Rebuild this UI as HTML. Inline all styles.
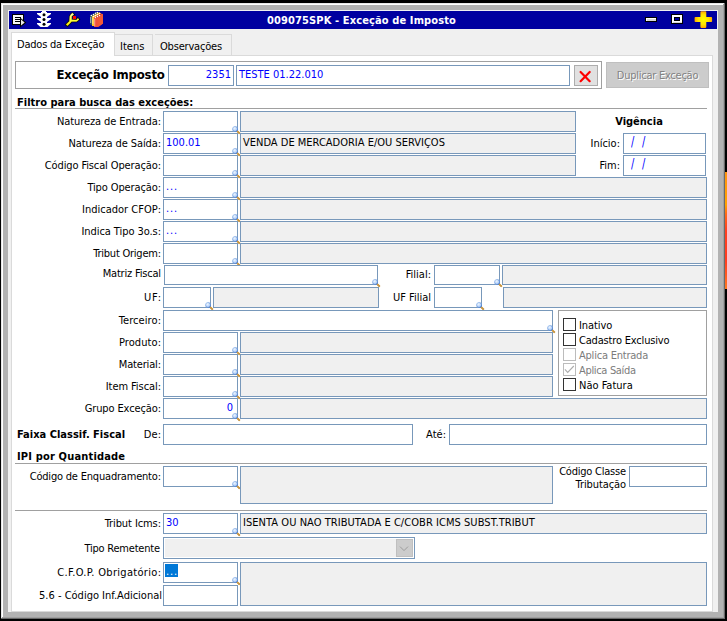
<!DOCTYPE html>
<html lang="pt-BR"><head><meta charset="utf-8"><title>009075SPK - Exceção de Imposto</title>
<style>
html,body{margin:0;padding:0;background:#000;width:727px;height:621px;overflow:hidden}
body{position:relative;font-family:"DejaVu Sans Condensed","Liberation Sans",sans-serif;font-size:11px}
.b{position:absolute;border:1px solid;box-sizing:content-box}
.r{position:absolute}
.t{position:absolute;white-space:nowrap}
svg{display:block;overflow:visible}
</style></head>
<body>
<svg width="0" height="0" style="position:absolute"><defs><radialGradient id="mg" cx="35%" cy="30%" r="75%"><stop offset="0" stop-color="#f4f9ff"/><stop offset="0.5" stop-color="#c4dcfb"/><stop offset="1" stop-color="#8db2f2"/></radialGradient><linearGradient id="ms" x1="0" y1="0" x2="1" y2="1"><stop offset="0" stop-color="#a9c9f3"/><stop offset="1" stop-color="#3f74c6"/></linearGradient></defs></svg>
<div class="r" style="left:1px;top:3px;width:724px;height:616px;background:#b2b2b2;"></div>
<div class="r" style="left:1px;top:3px;width:723px;height:1px;background:#e8e8e8;"></div>
<div class="r" style="left:1px;top:3px;width:1px;height:615px;background:#e8e8e8;"></div>
<div class="r" style="left:2px;top:4px;width:721px;height:1px;background:#fff;"></div>
<div class="r" style="left:2px;top:4px;width:1px;height:613px;background:#fff;"></div>
<div class="r" style="left:723px;top:4px;width:1px;height:614px;background:#a0a0a0;"></div>
<div class="r" style="left:2px;top:617px;width:722px;height:1px;background:#a0a0a0;"></div>
<div class="r" style="left:724px;top:3px;width:1px;height:616px;background:#696969;"></div>
<div class="r" style="left:1px;top:618px;width:724px;height:1px;background:#696969;"></div>
<div class="r" style="left:8px;top:10px;width:710px;height:602px;background:#f0f0f0;"></div>
<div class="r" style="left:9px;top:11px;width:708px;height:18px;background:#0000a0;"></div>
<div class="r" style="left:725px;top:172px;width:2px;height:117px;background:#f26a1b;background:linear-gradient(180deg,#ff9410 0%,#ffa200 28%,#ff6a18 36%,#ff4020 50%,#ff3c20 75%,#ff5a20 88%,#ff7a20 100%);"></div>
<div class="r" style="left:11px;top:55px;width:702px;height:556px;background:#fff;"></div>
<div class="r" style="left:11px;top:55px;width:1px;height:557px;background:#dadada;"></div>
<div class="r" style="left:712px;top:55px;width:1px;height:557px;background:#dadada;"></div>
<div class="r" style="left:11px;top:55px;width:702px;height:1px;background:#dadada;"></div>
<div class="r" style="left:11px;top:611px;width:702px;height:1px;background:#dadada;"></div>
<div class="r" style="left:115px;top:34px;width:117px;height:21px;background:#f0f0f0;"></div>
<div class="r" style="left:115px;top:34px;width:38px;height:1px;background:#dadada;"></div>
<div class="r" style="left:152px;top:34px;width:1px;height:21px;background:#dadada;"></div>
<div class="r" style="left:155px;top:34px;width:77px;height:1px;background:#dadada;"></div>
<div class="r" style="left:231px;top:34px;width:1px;height:21px;background:#dadada;"></div>
<div class="r" style="left:11px;top:32px;width:104px;height:24px;background:#fff;"></div>
<div class="r" style="left:11px;top:32px;width:104px;height:1px;background:#dadada;"></div>
<div class="r" style="left:11px;top:32px;width:1px;height:24px;background:#dadada;"></div>
<div class="r" style="left:114px;top:32px;width:1px;height:24px;background:#dadada;"></div>
<div class="t" style="top:37.19px;color:#000;font-size:11px;line-height:16px;left:17px;letter-spacing:-0.22px;">Dados da Exceção</div>
<div class="t" style="top:39.19px;color:#000;font-size:11px;line-height:16px;left:120px;">Itens</div>
<div class="t" style="top:39.19px;color:#000;font-size:11px;line-height:16px;left:160px;letter-spacing:-0.2px;">Observações</div>
<div class="t" style="top:13.19px;color:#fff;font-size:11px;line-height:16px;font-weight:bold;left:0px;left:-2px;width:727px;text-align:center;letter-spacing:0.12px;">009075SPK - Exceção de Imposto</div>
<div class="b" style="left:15px;top:61px;width:585px;height:26px;background:#fff;border-color:#a0a0a0;"></div>
<div class="t" style="top:64.50px;color:#000;font-size:13px;line-height:20px;font-weight:bold;left:56.5px;letter-spacing:-0.18px;">Exceção Imposto</div>
<div class="b" style="left:168px;top:65px;width:64px;height:19px;background:#fff;border-color:#7898ba;"></div>
<div class="t" style="top:67.19px;color:#0000ff;font-size:11px;line-height:16px;right:496px;">2351</div>
<div class="b" style="left:236px;top:65px;width:332px;height:19px;background:#fff;border-color:#7898ba;"></div>
<div class="t" style="top:67.19px;color:#0000ff;font-size:11px;line-height:16px;left:239px;">TESTE 01.22.010</div>
<div class="b" style="left:574px;top:65px;width:22px;height:19px;background:#e1e1e1;border-color:#adadad;"></div>
<svg class="r" style="left:574px;top:65px" width="24" height="21" viewBox="574 65 24 21"><path d="M580.6 72 L589.7 81.2 M589.7 72 L580.6 81.2" stroke="#f00" stroke-width="2.2" stroke-linecap="round"/></svg>
<div class="b" style="left:606px;top:62px;width:101px;height:24px;background:#cccccc;border-color:#bfbfbf;"></div>
<div class="t" style="top:68.19px;color:#838383;font-size:11px;line-height:16px;left:0px;left:606px;width:103px;text-align:center;text-shadow:1px 1px 0 #fff;letter-spacing:-0.25px;">Duplicar Exceção</div>
<div class="t" style="top:95.19px;color:#000;font-size:11px;line-height:16px;font-weight:bold;left:17px;">Filtro para busca das exceções:</div>
<div class="r" style="left:15px;top:108px;width:692px;height:1px;background:#a0a0a0;"></div>
<div class="t" style="top:114.19px;color:#000;font-size:11px;line-height:16px;right:566px;letter-spacing:-0.084px;margin-right:0.084px;">Natureza de Entrada:</div>
<div class="b" style="left:163px;top:111px;width:73px;height:19px;background:#fff;border-color:#7898ba;"></div>
<div class="b" style="left:240px;top:111px;width:334px;height:19px;background:#f0f0f0;border-color:#7898ba;"></div>
<svg class="r" style="left:231px;top:125px" width="10" height="10" viewBox="0 0 10 10"><path d="M5.9 5.9 L8.8 8.7" stroke="#b07a1c" stroke-width="1.8"/><path d="M5.9 5.6 L8.9 8.4" stroke="#e3ad58" stroke-width="0.9"/><circle cx="4.1" cy="4.05" r="2.55" fill="url(#mg)" stroke="url(#ms)" stroke-width="0.9"/></svg>
<div class="t" style="top:136.19px;color:#000;font-size:11px;line-height:16px;right:566px;letter-spacing:-0.106px;margin-right:0.106px;">Natureza de Saída:</div>
<div class="b" style="left:163px;top:133px;width:73px;height:19px;background:#fff;border-color:#7898ba;"></div>
<div class="t" style="top:135.19px;color:#0000ff;font-size:11px;line-height:16px;left:166px;">100.01</div>
<div class="b" style="left:240px;top:133px;width:334px;height:19px;background:#f0f0f0;border-color:#7898ba;"></div>
<div class="t" style="top:135.19px;color:#000;font-size:11px;line-height:16px;left:243px;">VENDA DE MERCADORIA E/OU SERVIÇOS</div>
<svg class="r" style="left:231px;top:147px" width="10" height="10" viewBox="0 0 10 10"><path d="M5.9 5.9 L8.8 8.7" stroke="#b07a1c" stroke-width="1.8"/><path d="M5.9 5.6 L8.9 8.4" stroke="#e3ad58" stroke-width="0.9"/><circle cx="4.1" cy="4.05" r="2.55" fill="url(#mg)" stroke="url(#ms)" stroke-width="0.9"/></svg>
<div class="t" style="top:158.19px;color:#000;font-size:11px;line-height:16px;right:566px;letter-spacing:-0.118px;margin-right:0.118px;">Código Fiscal Operação:</div>
<div class="b" style="left:163px;top:155px;width:73px;height:19px;background:#fff;border-color:#7898ba;"></div>
<div class="b" style="left:240px;top:155px;width:334px;height:19px;background:#f0f0f0;border-color:#7898ba;"></div>
<svg class="r" style="left:231px;top:169px" width="10" height="10" viewBox="0 0 10 10"><path d="M5.9 5.9 L8.8 8.7" stroke="#b07a1c" stroke-width="1.8"/><path d="M5.9 5.6 L8.9 8.4" stroke="#e3ad58" stroke-width="0.9"/><circle cx="4.1" cy="4.05" r="2.55" fill="url(#mg)" stroke="url(#ms)" stroke-width="0.9"/></svg>
<div class="t" style="top:180.19px;color:#000;font-size:11px;line-height:16px;right:566px;letter-spacing:-0.115px;margin-right:0.115px;">Tipo Operação:</div>
<div class="b" style="left:163px;top:177px;width:73px;height:19px;background:#fff;border-color:#7898ba;"></div>
<div class="t" style="top:179.19px;color:#0000ff;font-size:11px;line-height:16px;left:166px;letter-spacing:0.9px;">...</div>
<div class="b" style="left:240px;top:177px;width:465px;height:19px;background:#f0f0f0;border-color:#7898ba;"></div>
<svg class="r" style="left:231px;top:191px" width="10" height="10" viewBox="0 0 10 10"><path d="M5.9 5.9 L8.8 8.7" stroke="#b07a1c" stroke-width="1.8"/><path d="M5.9 5.6 L8.9 8.4" stroke="#e3ad58" stroke-width="0.9"/><circle cx="4.1" cy="4.05" r="2.55" fill="url(#mg)" stroke="url(#ms)" stroke-width="0.9"/></svg>
<div class="t" style="top:202.19px;color:#000;font-size:11px;line-height:16px;right:566px;">Indicador CFOP:</div>
<div class="b" style="left:163px;top:199px;width:73px;height:19px;background:#fff;border-color:#7898ba;"></div>
<div class="t" style="top:201.19px;color:#0000ff;font-size:11px;line-height:16px;left:166px;letter-spacing:0.9px;">...</div>
<div class="b" style="left:240px;top:199px;width:465px;height:19px;background:#f0f0f0;border-color:#7898ba;"></div>
<svg class="r" style="left:231px;top:213px" width="10" height="10" viewBox="0 0 10 10"><path d="M5.9 5.9 L8.8 8.7" stroke="#b07a1c" stroke-width="1.8"/><path d="M5.9 5.6 L8.9 8.4" stroke="#e3ad58" stroke-width="0.9"/><circle cx="4.1" cy="4.05" r="2.55" fill="url(#mg)" stroke="url(#ms)" stroke-width="0.9"/></svg>
<div class="t" style="top:224.19px;color:#000;font-size:11px;line-height:16px;right:566px;letter-spacing:-0.062px;margin-right:0.062px;">Indica Tipo 3o.s:</div>
<div class="b" style="left:163px;top:221px;width:73px;height:19px;background:#fff;border-color:#7898ba;"></div>
<div class="t" style="top:223.19px;color:#0000ff;font-size:11px;line-height:16px;left:166px;letter-spacing:0.9px;">...</div>
<div class="b" style="left:240px;top:221px;width:465px;height:19px;background:#f0f0f0;border-color:#7898ba;"></div>
<svg class="r" style="left:231px;top:235px" width="10" height="10" viewBox="0 0 10 10"><path d="M5.9 5.9 L8.8 8.7" stroke="#b07a1c" stroke-width="1.8"/><path d="M5.9 5.6 L8.9 8.4" stroke="#e3ad58" stroke-width="0.9"/><circle cx="4.1" cy="4.05" r="2.55" fill="url(#mg)" stroke="url(#ms)" stroke-width="0.9"/></svg>
<div class="t" style="top:246.19px;color:#000;font-size:11px;line-height:16px;right:566px;letter-spacing:-0.231px;margin-right:0.231px;">Tribut Origem:</div>
<div class="b" style="left:163px;top:243px;width:73px;height:19px;background:#fff;border-color:#7898ba;"></div>
<div class="b" style="left:240px;top:243px;width:465px;height:19px;background:#f0f0f0;border-color:#7898ba;"></div>
<svg class="r" style="left:231px;top:257px" width="10" height="10" viewBox="0 0 10 10"><path d="M5.9 5.9 L8.8 8.7" stroke="#b07a1c" stroke-width="1.8"/><path d="M5.9 5.6 L8.9 8.4" stroke="#e3ad58" stroke-width="0.9"/><circle cx="4.1" cy="4.05" r="2.55" fill="url(#mg)" stroke="url(#ms)" stroke-width="0.9"/></svg>
<div class="t" style="top:114.19px;color:#000;font-size:11px;line-height:16px;font-weight:bold;left:637px;left:591px;width:96px;text-align:center;">Vigência</div>
<div class="t" style="top:136.19px;color:#000;font-size:11px;line-height:16px;right:107px;">Início:</div>
<div class="b" style="left:623px;top:133px;width:81px;height:19px;background:#fff;border-color:#7898ba;"></div>
<div class="t" style="top:135.19px;color:#0000ff;font-size:11px;line-height:16px;left:631px;word-spacing:4.5px;transform:scaleY(1.28);transform-origin:50% 60%;">/ /</div>
<div class="t" style="top:158.19px;color:#000;font-size:11px;line-height:16px;right:107px;">Fim:</div>
<div class="b" style="left:623px;top:155px;width:81px;height:19px;background:#fff;border-color:#7898ba;"></div>
<div class="t" style="top:157.19px;color:#0000ff;font-size:11px;line-height:16px;left:631px;word-spacing:4.5px;transform:scaleY(1.28);transform-origin:50% 60%;">/ /</div>
<div class="t" style="top:266.19px;color:#000;font-size:11px;line-height:16px;right:566px;letter-spacing:-0.200px;margin-right:0.200px;">Matriz Fiscal</div>
<div class="b" style="left:164px;top:265px;width:212px;height:18px;background:#fff;border-color:#7898ba;"></div>
<svg class="r" style="left:371px;top:278px" width="10" height="10" viewBox="0 0 10 10"><path d="M5.9 5.9 L8.8 8.7" stroke="#b07a1c" stroke-width="1.8"/><path d="M5.9 5.6 L8.9 8.4" stroke="#e3ad58" stroke-width="0.9"/><circle cx="4.1" cy="4.05" r="2.55" fill="url(#mg)" stroke="url(#ms)" stroke-width="0.9"/></svg>
<div class="t" style="top:267.19px;color:#000;font-size:11px;line-height:16px;right:296px;">Filial:</div>
<div class="b" style="left:434px;top:265px;width:64px;height:18px;background:#fff;border-color:#7898ba;"></div>
<svg class="r" style="left:493px;top:278px" width="10" height="10" viewBox="0 0 10 10"><path d="M5.9 5.9 L8.8 8.7" stroke="#b07a1c" stroke-width="1.8"/><path d="M5.9 5.6 L8.9 8.4" stroke="#e3ad58" stroke-width="0.9"/><circle cx="4.1" cy="4.05" r="2.55" fill="url(#mg)" stroke="url(#ms)" stroke-width="0.9"/></svg>
<div class="b" style="left:502px;top:265px;width:203px;height:18px;background:#f0f0f0;border-color:#7898ba;"></div>
<div class="t" style="top:290.19px;color:#000;font-size:11px;line-height:16px;right:566px;letter-spacing:0.750px;margin-right:-0.750px;">UF:</div>
<div class="b" style="left:163px;top:287px;width:46px;height:19px;background:#fff;border-color:#7898ba;"></div>
<svg class="r" style="left:204px;top:301px" width="10" height="10" viewBox="0 0 10 10"><path d="M5.9 5.9 L8.8 8.7" stroke="#b07a1c" stroke-width="1.8"/><path d="M5.9 5.6 L8.9 8.4" stroke="#e3ad58" stroke-width="0.9"/><circle cx="4.1" cy="4.05" r="2.55" fill="url(#mg)" stroke="url(#ms)" stroke-width="0.9"/></svg>
<div class="b" style="left:213px;top:287px;width:164px;height:19px;background:#f0f0f0;border-color:#7898ba;"></div>
<div class="t" style="top:290.19px;color:#000;font-size:11px;line-height:16px;right:296px;">UF Filial</div>
<div class="b" style="left:434px;top:287px;width:46px;height:19px;background:#fff;border-color:#7898ba;"></div>
<svg class="r" style="left:475px;top:301px" width="10" height="10" viewBox="0 0 10 10"><path d="M5.9 5.9 L8.8 8.7" stroke="#b07a1c" stroke-width="1.8"/><path d="M5.9 5.6 L8.9 8.4" stroke="#e3ad58" stroke-width="0.9"/><circle cx="4.1" cy="4.05" r="2.55" fill="url(#mg)" stroke="url(#ms)" stroke-width="0.9"/></svg>
<div class="b" style="left:503px;top:287px;width:202px;height:19px;background:#f0f0f0;border-color:#7898ba;"></div>
<div class="t" style="top:313.19px;color:#000;font-size:11px;line-height:16px;right:566px;letter-spacing:0.088px;margin-right:-0.088px;">Terceiro:</div>
<div class="b" style="left:163px;top:310px;width:388px;height:19px;background:#fff;border-color:#7898ba;"></div>
<svg class="r" style="left:546px;top:324px" width="10" height="10" viewBox="0 0 10 10"><path d="M5.9 5.9 L8.8 8.7" stroke="#b07a1c" stroke-width="1.8"/><path d="M5.9 5.6 L8.9 8.4" stroke="#e3ad58" stroke-width="0.9"/><circle cx="4.1" cy="4.05" r="2.55" fill="url(#mg)" stroke="url(#ms)" stroke-width="0.9"/></svg>
<div class="t" style="top:335.19px;color:#000;font-size:11px;line-height:16px;right:566px;letter-spacing:0.086px;margin-right:-0.086px;">Produto:</div>
<div class="b" style="left:163px;top:332px;width:73px;height:19px;background:#fff;border-color:#7898ba;"></div>
<svg class="r" style="left:231px;top:346px" width="10" height="10" viewBox="0 0 10 10"><path d="M5.9 5.9 L8.8 8.7" stroke="#b07a1c" stroke-width="1.8"/><path d="M5.9 5.6 L8.9 8.4" stroke="#e3ad58" stroke-width="0.9"/><circle cx="4.1" cy="4.05" r="2.55" fill="url(#mg)" stroke="url(#ms)" stroke-width="0.9"/></svg>
<div class="b" style="left:240px;top:332px;width:311px;height:19px;background:#f0f0f0;border-color:#7898ba;"></div>
<div class="t" style="top:357.19px;color:#000;font-size:11px;line-height:16px;right:566px;letter-spacing:-0.175px;margin-right:0.175px;">Material:</div>
<div class="b" style="left:163px;top:354px;width:73px;height:19px;background:#fff;border-color:#7898ba;"></div>
<svg class="r" style="left:231px;top:368px" width="10" height="10" viewBox="0 0 10 10"><path d="M5.9 5.9 L8.8 8.7" stroke="#b07a1c" stroke-width="1.8"/><path d="M5.9 5.6 L8.9 8.4" stroke="#e3ad58" stroke-width="0.9"/><circle cx="4.1" cy="4.05" r="2.55" fill="url(#mg)" stroke="url(#ms)" stroke-width="0.9"/></svg>
<div class="b" style="left:240px;top:354px;width:311px;height:19px;background:#f0f0f0;border-color:#7898ba;"></div>
<div class="t" style="top:379.19px;color:#000;font-size:11px;line-height:16px;right:566px;letter-spacing:-0.073px;margin-right:0.073px;">Item Fiscal:</div>
<div class="b" style="left:163px;top:376px;width:73px;height:19px;background:#fff;border-color:#7898ba;"></div>
<svg class="r" style="left:231px;top:390px" width="10" height="10" viewBox="0 0 10 10"><path d="M5.9 5.9 L8.8 8.7" stroke="#b07a1c" stroke-width="1.8"/><path d="M5.9 5.6 L8.9 8.4" stroke="#e3ad58" stroke-width="0.9"/><circle cx="4.1" cy="4.05" r="2.55" fill="url(#mg)" stroke="url(#ms)" stroke-width="0.9"/></svg>
<div class="b" style="left:240px;top:376px;width:311px;height:19px;background:#f0f0f0;border-color:#7898ba;"></div>
<div class="t" style="top:401.19px;color:#000;font-size:11px;line-height:16px;right:566px;letter-spacing:-0.115px;margin-right:0.115px;">Grupo Exceção:</div>
<div class="b" style="left:163px;top:398px;width:73px;height:19px;background:#fff;border-color:#7898ba;"></div>
<svg class="r" style="left:231px;top:412px" width="10" height="10" viewBox="0 0 10 10"><path d="M5.9 5.9 L8.8 8.7" stroke="#b07a1c" stroke-width="1.8"/><path d="M5.9 5.6 L8.9 8.4" stroke="#e3ad58" stroke-width="0.9"/><circle cx="4.1" cy="4.05" r="2.55" fill="url(#mg)" stroke="url(#ms)" stroke-width="0.9"/></svg>
<div class="b" style="left:240px;top:398px;width:465px;height:19px;background:#f0f0f0;border-color:#7898ba;"></div>
<div class="t" style="top:400.19px;color:#0000ff;font-size:11px;line-height:16px;right:494px;">0</div>
<div class="b" style="left:558px;top:310px;width:147px;height:84px;background:#fff;border-color:#a0a0a0;"></div>
<div class="b" style="left:563px;top:318px;width:11px;height:11px;background:#fff;border-color:#333;"></div>
<div class="t" style="top:318.19px;color:#000;font-size:11px;line-height:16px;left:579px;letter-spacing:-0.1px;">Inativo</div>
<div class="b" style="left:563px;top:333px;width:11px;height:11px;background:#fff;border-color:#333;"></div>
<div class="t" style="top:333.19px;color:#000;font-size:11px;line-height:16px;left:579px;letter-spacing:-0.18px;">Cadastro Exclusivo</div>
<div class="b" style="left:563px;top:348px;width:11px;height:11px;background:#fff;border-color:#bcbcbc;"></div>
<div class="t" style="top:348.19px;color:#7c7c7c;font-size:11px;line-height:16px;left:579px;letter-spacing:-0.22px;">Aplica Entrada</div>
<div class="b" style="left:563px;top:363px;width:11px;height:11px;background:#fff;border-color:#bcbcbc;"></div>
<div class="t" style="top:363.19px;color:#7c7c7c;font-size:11px;line-height:16px;left:579px;letter-spacing:-0.33px;">Aplica Saída</div>
<svg class="r" style="left:563px;top:363px" width="13" height="13" viewBox="0 0 13 13"><path d="M1.9 6.4 L4.7 9.4 L10.8 3" stroke="#acacac" stroke-width="1.1" fill="none"/></svg>
<div class="b" style="left:563px;top:378px;width:11px;height:11px;background:#fff;border-color:#333;"></div>
<div class="t" style="top:378.19px;color:#000;font-size:11px;line-height:16px;left:579px;letter-spacing:0px;">Não Fatura</div>
<div class="t" style="top:427.19px;color:#000;font-size:11px;line-height:16px;font-weight:bold;left:17px;">Faixa Classif. Fiscal</div>
<div class="t" style="top:427.19px;color:#000;font-size:11px;line-height:16px;right:566px;letter-spacing:0.150px;margin-right:-0.150px;">De:</div>
<div class="b" style="left:163px;top:424px;width:248px;height:19px;background:#fff;border-color:#7898ba;"></div>
<div class="t" style="top:427.19px;color:#000;font-size:11px;line-height:16px;right:281px;">Até:</div>
<div class="b" style="left:449px;top:424px;width:256px;height:19px;background:#fff;border-color:#7898ba;"></div>
<div class="t" style="top:449.19px;color:#000;font-size:11px;line-height:16px;font-weight:bold;left:17px;letter-spacing:0.17px;">IPI por Quantidade</div>
<div class="r" style="left:15px;top:463px;width:692px;height:1px;background:#a0a0a0;"></div>
<div class="t" style="top:469.19px;color:#000;font-size:11px;line-height:16px;right:566px;letter-spacing:-0.196px;margin-right:0.196px;">Código de Enquadramento:</div>
<div class="b" style="left:163px;top:466px;width:73px;height:19px;background:#fff;border-color:#7898ba;"></div>
<svg class="r" style="left:231px;top:480px" width="10" height="10" viewBox="0 0 10 10"><path d="M5.9 5.9 L8.8 8.7" stroke="#b07a1c" stroke-width="1.8"/><path d="M5.9 5.6 L8.9 8.4" stroke="#e3ad58" stroke-width="0.9"/><circle cx="4.1" cy="4.05" r="2.55" fill="url(#mg)" stroke="url(#ms)" stroke-width="0.9"/></svg>
<div class="b" style="left:240px;top:466px;width:311px;height:36px;background:#f0f0f0;border-color:#7898ba;"></div>
<div class="t" style="top:464.19px;color:#000;font-size:11px;line-height:16px;right:101px;letter-spacing:-0.23px;margin-right:0.23px;">Código Classe</div>
<div class="t" style="top:477.19px;color:#000;font-size:11px;line-height:16px;right:101px;letter-spacing:-0.1px;margin-right:0.1px;">Tributação</div>
<div class="b" style="left:629px;top:466px;width:76px;height:19px;background:#fff;border-color:#7898ba;"></div>
<div class="r" style="left:15px;top:510px;width:692px;height:1px;background:#a0a0a0;"></div>
<div class="t" style="top:516.19px;color:#000;font-size:11px;line-height:16px;right:566px;letter-spacing:-0.091px;margin-right:0.091px;">Tribut Icms:</div>
<div class="b" style="left:163px;top:513px;width:73px;height:19px;background:#fff;border-color:#7898ba;"></div>
<svg class="r" style="left:231px;top:527px" width="10" height="10" viewBox="0 0 10 10"><path d="M5.9 5.9 L8.8 8.7" stroke="#b07a1c" stroke-width="1.8"/><path d="M5.9 5.6 L8.9 8.4" stroke="#e3ad58" stroke-width="0.9"/><circle cx="4.1" cy="4.05" r="2.55" fill="url(#mg)" stroke="url(#ms)" stroke-width="0.9"/></svg>
<div class="b" style="left:240px;top:513px;width:465px;height:19px;background:#f0f0f0;border-color:#7898ba;"></div>
<div class="t" style="top:515.19px;color:#0000ff;font-size:11px;line-height:16px;left:166px;">30</div>
<div class="t" style="top:515.19px;color:#000;font-size:11px;line-height:16px;left:243px;letter-spacing:0.05px;">ISENTA OU NAO TRIBUTADA E C/COBR ICMS SUBST.TRIBUT</div>
<div class="t" style="top:541.19px;color:#000;font-size:11px;line-height:16px;right:567px;letter-spacing:-0.215px;margin-right:0.215px;">Tipo Remetente</div>
<div class="b" style="left:163px;top:537px;width:250px;height:20px;background:#f0f0f0;border-color:#7898ba;box-shadow:inset 0 0 0 1px #fff;"></div>
<div class="b" style="left:396px;top:539px;width:15px;height:16px;background:#cccccc;border-color:#bfbfbf;"></div>
<svg class="r" style="left:396px;top:539px" width="17" height="18" viewBox="396 539 17 18"><path d="M400 546.6 L404 550.6 L408 546.6" stroke="#9c9c9c" stroke-width="1" fill="none"/></svg>
<div class="t" style="top:565.19px;color:#000;font-size:11px;line-height:16px;right:566px;letter-spacing:0.310px;margin-right:-0.310px;">C.F.O.P. Obrigatório:</div>
<div class="b" style="left:163px;top:562px;width:73px;height:19px;background:#fff;border-color:#7898ba;"></div>
<svg class="r" style="left:231px;top:576px" width="10" height="10" viewBox="0 0 10 10"><path d="M5.9 5.9 L8.8 8.7" stroke="#b07a1c" stroke-width="1.8"/><path d="M5.9 5.6 L8.9 8.4" stroke="#e3ad58" stroke-width="0.9"/><circle cx="4.1" cy="4.05" r="2.55" fill="url(#mg)" stroke="url(#ms)" stroke-width="0.9"/></svg>
<div class="b" style="left:240px;top:562px;width:465px;height:42px;background:#f0f0f0;border-color:#7898ba;"></div>
<div class="r" style="left:165px;top:564px;width:13px;height:13px;background:#0078d7;"></div>
<div class="t" style="top:564.19px;color:#fff;font-size:11px;line-height:16px;left:166px;letter-spacing:0.9px;">...</div>
<div class="t" style="top:588.19px;color:#000;font-size:11px;line-height:16px;right:565px;letter-spacing:-0.004px;margin-right:0.004px;">5.6 - Código Inf.Adicional</div>
<div class="b" style="left:163px;top:585px;width:73px;height:19px;background:#fff;border-color:#7898ba;"></div>
<svg class="r" style="left:9px;top:11px" width="100" height="18" viewBox="9 11 100 18">
<!-- list/arrow icon -->
<rect x="12" y="14" width="12" height="11" fill="#000"/>
<rect x="13" y="15" width="10" height="9" fill="#f6f6f6"/>
<rect x="15" y="17" width="6" height="1" fill="#000"/>
<rect x="15" y="19" width="6" height="1" fill="#000"/>
<rect x="15" y="21" width="6" height="1" fill="#000"/>
<polygon points="20,17.5 26.3,22.5 20,27.5" fill="#000"/>
<polygon points="21,19.6 24.7,22.5 21,25.4" fill="#e8e8e8"/>
<!-- traffic light -->
<g fill="#fff">
<rect x="41" y="12" width="6" height="15"/><rect x="42" y="11" width="4" height="1.5"/>
<polygon points="37,13 51,13 51,14 47,17 41,17 37,14"/>
<polygon points="37,18 51,18 51,19 47,22 41,22 37,19"/>
<polygon points="37,23 51,23 51,24 47.5,27 40.5,27 37,24"/>
</g>
<circle cx="44" cy="14.7" r="1.5" fill="#000"/>
<circle cx="44" cy="19.5" r="1.5" fill="#000"/>
<circle cx="44" cy="24.3" r="1.5" fill="#000"/>
<!-- wrench -->
<defs><linearGradient id="wg" x1="0" y1="0" x2="0" y2="1"><stop offset="0" stop-color="#ffffb0"/><stop offset="0.55" stop-color="#ffff40"/><stop offset="1" stop-color="#ffee00"/></linearGradient></defs>
<polygon points="72.4,13.1 73.9,14.5 71.7,16.3 71.7,19.7 76.4,20 77.8,18.3 79.1,19.4 76.6,21.5 71.7,21.5 67.6,25.8 66,24.6 69.4,21.2 69.8,16.2 70.8,14.5" fill="#000" stroke="#000" stroke-width="1.7" stroke-linejoin="miter"/>
<polygon points="72.4,13.1 73.9,14.5 71.7,16.3 71.7,19.7 76.4,20 77.8,18.3 79.1,19.4 76.6,21.5 71.7,21.5 67.6,25.8 66,24.6 69.4,21.2 69.8,16.2 70.8,14.5" fill="url(#wg)" stroke="url(#wg)" stroke-width="0.3"/>
<rect x="73" y="16" width="3" height="3" fill="#f00"/>
<!-- books -->
<polygon points="90,15.5 96.8,12 98.5,12.6 92,16.5 92,25 90,24.5" fill="#2f5060"/>
<rect x="90.3" y="17" width="0.9" height="6" fill="#b8c8d0"/>
<polygon points="92,16.3 99.3,12.3 101.3,13.4 94.3,18 94.3,26 92,26" fill="#ffc020"/>
<rect x="92.4" y="18" width="0.9" height="6" fill="#ffe9a0"/>
<polygon points="94,17.6 100.3,13.6 103,14 103,23.5 98,27 94,27" fill="#f2523a"/>
<polygon points="98.3,18.2 103,14.2 103,23.5 98.3,27" fill="#f45a35"/>
<rect x="94.2" y="19" width="1" height="7" fill="#f9a898"/>
<g fill="#8a1020">
<circle cx="96.2" cy="17.2" r="0.6"/><circle cx="98.2" cy="16" r="0.6"/><circle cx="100.2" cy="14.9" r="0.6"/>
</g>
<g fill="#fff">
<circle cx="91.4" cy="15.5" r="0.75"/><circle cx="93.5" cy="14.4" r="0.75"/><circle cx="95.5" cy="13.3" r="0.75"/><circle cx="97.4" cy="12.5" r="0.75"/>
<circle cx="93.5" cy="16.6" r="0.75"/><circle cx="95.5" cy="15.5" r="0.75"/><circle cx="97.5" cy="14.4" r="0.75"/><circle cx="99.6" cy="13.4" r="0.6"/>
<circle cx="95.5" cy="17.6" r="0.75"/><circle cx="97.5" cy="16.5" r="0.75"/><circle cx="99.6" cy="15.4" r="0.75"/>
</g>
</svg>
<svg class="r" style="left:640px;top:11px" width="77" height="18" viewBox="640 11 77 18">
<defs><radialGradient id="pg" cx="50%" cy="50%" r="55%"><stop offset="0" stop-color="#ffff00"/><stop offset="0.55" stop-color="#ffe400"/><stop offset="1" stop-color="#ff9800"/></radialGradient></defs>
<rect x="645" y="17" width="12" height="5" fill="#000"/>
<rect x="646" y="18" width="10" height="3" fill="#fff"/>
<rect x="647" y="19" width="9" height="2" fill="#d8d8d8"/>
<rect x="671" y="14" width="12" height="10" fill="#000"/>
<rect x="672" y="15" width="10" height="8" fill="#fff"/>
<rect x="673" y="22" width="9" height="1" fill="#d8d8d8"/>
<rect x="674" y="17" width="6" height="4" fill="#000"/>
<rect x="675" y="18" width="4" height="2" fill="#00009c"/>
<path d="M701.2 11.3 h4.3 a0.8 0.8 0 0 1 0.8 0.8 v5 h5 a0.8 0.8 0 0 1 0.8 0.8 v3.4 a0.8 0.8 0 0 1 -0.8 0.8 h-5 v5 a0.8 0.8 0 0 1 -0.8 0.8 h-4.3 a0.8 0.8 0 0 1 -0.8 -0.8 v-5 h-5 a0.8 0.8 0 0 1 -0.8 -0.8 v-3.4 a0.8 0.8 0 0 1 0.8 -0.8 h5 v-5 a0.8 0.8 0 0 1 0.8 -0.8z" fill="url(#pg)"/>
</svg>

</body></html>
